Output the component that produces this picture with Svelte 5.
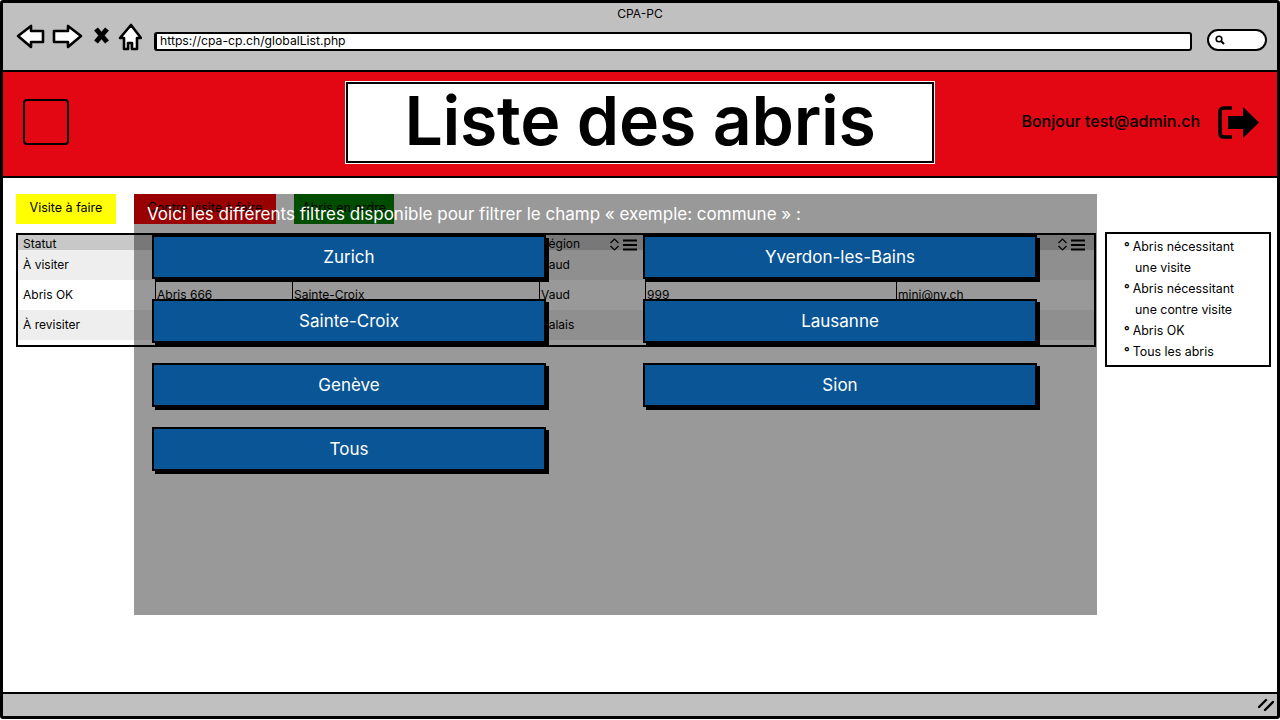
<script lang="ts">
    const columns = [
        { key: "statut", label: "Statut" },
        { key: "nom", label: "Nom" },
        { key: "commune", label: "Commune" },
        { key: "region", label: "Région" },
        { key: "numero", label: "Numéro" },
        { key: "contact", label: "Contact" },
    ];

    const rows = [
        { statut: "À visiter", nom: "", commune: "", region: "Vaud", numero: "", contact: "" },
        { statut: "Abris OK", nom: "Abris 666", commune: "Sainte-Croix", region: "Vaud", numero: "999", contact: "mini@ny.ch" },
        { statut: "À revisiter", nom: "", commune: "", region: "Valais", numero: "", contact: "" },
    ];

    const filters = ["Zurich", "Yverdon-les-Bains", "Sainte-Croix", "Lausanne", "Genève", "Sion", "Tous"];
</script>

<div class="window">
    <header class="chrome">
        <div class="chrome-title">CPA-PC</div>
        <div class="toolbar">
            <svg class="nav-icons" width="126" height="28" viewBox="0 0 126 28" fill="#fff" stroke="#000" stroke-width="2.6" stroke-linejoin="round">
                <path d="M2 13 L15 3 L15 8 L27 8 L27 19 L15 19 L15 24 Z" />
                <path d="M65 13 L52 3 L52 8 L38 8 L38 19 L52 19 L52 24 Z" />
                <path d="M80 6 L91 19 M91 6 L80 19" stroke-width="5" fill="none" />
                <path d="M115 2 L125 15 L121 15 L121 26 L116 26 L116 20 L112 20 L112 26 L108 26 L108 15 L104 15 Z" />
            </svg>
            <div class="url-bar">https://cpa-cp.ch/globalList.php</div>
            <div class="search-box">
                <svg width="10" height="10" viewBox="0 0 10 10" fill="none" stroke="#000">
                    <circle cx="4" cy="4" r="2.8" stroke-width="1.6" />
                    <path d="M6 6 L9 9" stroke-width="2" />
                </svg>
            </div>
        </div>
    </header>

    <div class="site-header">
        <div class="menu-box"></div>
        <h1 class="page-title">Liste des abris</h1>
        <div class="user">
            <span class="hello">Bonjour test@admin.ch</span>
            <svg width="42" height="33" viewBox="0 0 42 33">
                <path d="M14 2 L6 2 Q2 2 2 6 L2 27 Q2 31 6 31 L14 31" fill="none" stroke="#000" stroke-width="3.6" />
                <path d="M10 10 L25 10 L25 1 L41 16.500 L25 32 L25 23 L10 23 Z" fill="#000" />
            </svg>
        </div>
    </div>

    <main class="content">
        <div class="left">
            <div class="status-buttons">
                <span class="tag yellow">Visite à faire</span>
                <span class="tag red">Contre visite à faire</span>
                <span class="tag green">Abris en ordre</span>
            </div>
            <div class="table">
                <div class="row head">
                    {#each columns as col}
                        <div class="cell">
                            <span>{col.label}</span>
                            <span class="tools">
                                <svg width="11" height="13" viewBox="0 0 11 13" fill="none" stroke="#000" stroke-width="1.200">
                                    <path d="M1.500 5 L5.500 1 L9.500 5 M1.500 8 L5.500 12 L9.500 8" />
                                </svg>
                                <svg width="14" height="12" viewBox="0 0 14 12" stroke="#000" stroke-width="2">
                                    <path d="M0 1.500 H14 M0 6 H14 M0 10.500 H14" />
                                </svg>
                            </span>
                        </div>
                    {/each}
                </div>
                {#each rows as row}
                    <div class="row">
                        {#each columns as col}
                            <div class="cell">{row[col.key]}</div>
                        {/each}
                    </div>
                {/each}
            </div>
        </div>

        <ul class="legend">
            <li>Abris nécessitant<br /><span>une visite</span></li>
            <li>Abris nécessitant<br /><span>une contre visite</span></li>
            <li>Abris OK</li>
            <li>Tous les abris</li>
        </ul>

        <div class="overlay">
            <p class="overlay-text">Voici les différents filtres disponible pour filtrer le champ « exemple: commune » :</p>
            <div class="filters">
                {#each filters as filter}
                    <div class="filter">{filter}</div>
                {/each}
            </div>
        </div>
    </main>

    <footer class="status-bar">
        <svg width="16" height="14" viewBox="0 0 16 14" stroke="#000" stroke-width="2.400" stroke-linecap="round">
            <path d="M1 9 L8 2 M7 12 L15 4" />
        </svg>
    </footer>
</div>

<style>
    :global(body) {
        margin: 0;
        background: #fff;
    }

    .window {
        box-sizing: border-box;
        width: 1280px;
        height: 719px;
        display: flex;
        flex-direction: column;
        border: 3px solid #000;
        border-radius: 3px;
        font-family: Inter, "Liberation Sans", sans-serif;
        color: #000;
        overflow: hidden;
    }

    .chrome {
        height: 67px;
        flex: none;
        background: #c0c0c0;
        border-bottom: 2px solid #000;
    }

    .chrome-title {
        font-size: 12px;
        line-height: 14px;
        padding-top: 4px;
        text-align: center;
    }

    .toolbar {
        display: flex;
        align-items: center;
        padding: 2px 10px 0 13px;
    }

    .nav-icons {
        flex: none;
    }

    .url-bar {
        flex: 1;
        margin: 8px 0 0 12px;
        height: 19px;
        box-sizing: border-box;
        background: #fff;
        border: 2px solid #000;
        border-left-width: 3px;
        border-radius: 3px;
        font-size: 12.200px;
        line-height: 13px;
        padding-left: 3px;
    }

    .search-box {
        flex: none;
        width: 60px;
        height: 22px;
        margin: 6px 0 0 15px;
        box-sizing: border-box;
        background: #fff;
        border: 2px solid #000;
        border-radius: 11px;
        display: flex;
        align-items: center;
        padding-left: 6px;
    }

    .site-header {
        height: 100px;
        padding-bottom: 4px;
        flex: none;
        background: #e30613;
        border-bottom: 2px solid #000;
        display: grid;
        grid-template-columns: 1fr 588px 1fr;
        align-items: center;
    }

    .menu-box {
        width: 46px;
        height: 46px;
        box-sizing: border-box;
        margin-left: 20px;
        border: 2px solid #000;
        border-radius: 4px;
    }

    .page-title {
        margin: 0;
        height: 81px;
        box-sizing: border-box;
        background: #fff;
        border: 2px solid #000;
        outline: 1px solid #fff;
        font-size: 68px;
        font-weight: 600;
        letter-spacing: -0.3px;
        line-height: 72px;
        text-align: center;
    }

    .user {
        display: flex;
        align-items: center;
        justify-content: flex-end;
        gap: 18px;
        padding-right: 17px;
        font-size: 16px;
        font-weight: 500;
    }

    .hello {
        padding-bottom: 3px;
    }

    .content {
        flex: 1;
        position: relative;
        display: flex;
        align-items: flex-start;
        gap: 9px;
        padding: 16px 6px 0 13px;
        background: #fff;
    }

    .left {
        width: 1080px;
        flex: none;
    }

    .status-buttons {
        display: flex;
        gap: 18px;
        height: 30px;
        margin-bottom: 9px;
    }

    .tag {
        font-size: 12.500px;
        line-height: 27px;
        text-align: center;
    }

    .yellow {
        width: 100px;
        background: #ffff00;
    }

    .red {
        width: 142px;
        background: #ff0000;
    }

    .green {
        width: 100px;
        background: #008000;
    }

    .table {
        height: 114px;
        box-sizing: border-box;
        border: 2px solid #000;
        background: #fff;
        font-size: 12px;
        overflow: hidden;
    }

    .row {
        display: grid;
        grid-template-columns: 138px 137px 247px 106px 251px 1fr;
        height: 30px;
    }

    .row:nth-child(even) {
        background: #eee;
    }

    .row.head {
        height: 15px;
        background: #c8c8c8;
    }

    .cell {
        box-sizing: border-box;
        display: flex;
        align-items: center;
        justify-content: space-between;
        padding: 0 0 1px 1px;
        box-shadow: -1px 0 0 #000;
        line-height: 15px;
        white-space: nowrap;
    }

    .cell:first-child {
        box-shadow: none;
        padding-left: 5px;
    }

    .row.head .cell {
        padding-bottom: 4px;
    }

    .tools {
        display: flex;
        align-items: center;
        gap: 3px;
        margin-top: 3px;
        padding-right: 9px;
    }

    .row.head .cell:not(:nth-child(4)):not(:last-child) .tools {
        visibility: hidden;
    }

    .row:not(.head) .cell {
        height: 30px;
    }

    .legend {
        width: 166px;
        height: 135px;
        margin: 38px 0 0;
        box-sizing: border-box;
        list-style: none;
        padding: 2px 0 0 17px;
        border: 2px solid #000;
        font-size: 12.400px;
        line-height: 21px;
    }

    .legend li::before {
        content: "°";
        margin-right: 3px;
        font-weight: 700;
    }

    .legend li span {
        margin-left: 11px;
    }

    .overlay {
        position: absolute;
        left: 131px;
        top: 16px;
        width: 963px;
        height: 421px;
        box-sizing: border-box;
        padding: 8px 0 0 13px;
        background: rgba(0, 0, 0, 0.4);
    }

    .overlay-text {
        margin: 0;
        color: #fff;
        font-size: 17px;
        line-height: 24px;
    }

    .filters {
        display: grid;
        grid-template-columns: 394px 394px;
        column-gap: 97px;
        row-gap: 20px;
        margin: 9px 0 0 5px;
    }

    .filter {
        height: 44px;
        box-sizing: border-box;
        background: #0a5596;
        border: 2px solid #000;
        box-shadow: 3px 3px 0 #000;
        color: #fff;
        font-size: 17px;
        line-height: 40px;
        text-align: center;
    }

    .status-bar {
        height: 22px;
        flex: none;
        background: #c0c0c0;
        border-top: 2px solid #000;
        display: flex;
        align-items: center;
        justify-content: flex-end;
        padding-right: 3px;
    }
</style>
